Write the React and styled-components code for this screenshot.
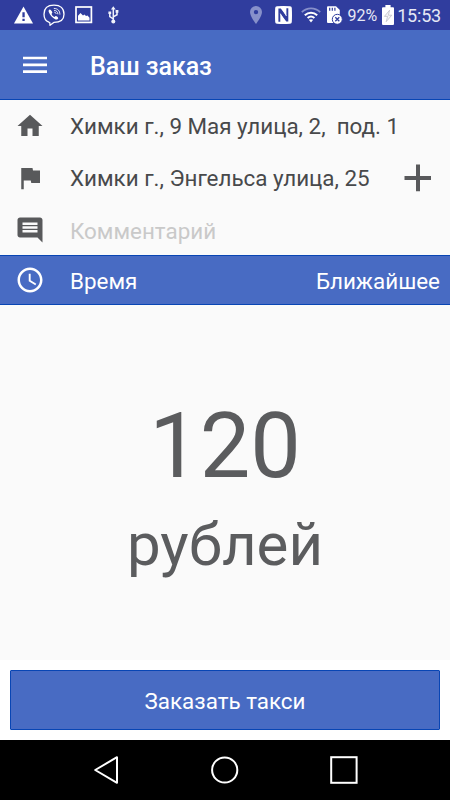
import React from "react";
import styled, { createGlobalStyle } from "styled-components";

const GlobalStyle = createGlobalStyle`
  * { box-sizing: border-box; }
  body { margin: 0; font-family: Roboto, "Noto Sans", sans-serif; }
`;

const Screen = styled.div`
  width: 450px;
  height: 800px;
  display: flex;
  flex-direction: column;
  overflow: hidden;
  background: #fafafa;
`;

const StatusBar = styled.div`
  height: 30px;
  display: flex;
  justify-content: space-between;
  padding: 0 9px 0 14px;
  background: #303d9e;
  color: #e6e8f5;
`;

const StatusGroup = styled.div`
  display: flex;
  align-items: center;
`;

const StatusText = styled.span`
  font-size: ${(p) => p.$size}px;
  line-height: 30px;
  letter-spacing: ${(p) => p.$spacing || 0}px;
  margin-left: ${(p) => p.$left || 0}px;
  padding-top: 1px;
`;

const Icon = styled.svg`
  display: block;
  flex: none;
  margin-left: ${(p) => p.$left || 0}px;
`;

const AppBar = styled.header`
  height: 70px;
  display: flex;
  align-items: center;
  gap: 43px;
  padding: 1px 23px 0 23px;
  background: #486bc3;
  border-bottom: 1px solid #0845b4;
`;

const Title = styled.h1`
  margin: 0;
  padding-top: 3px;
  font-size: 25px;
  line-height: 30px;
  font-weight: 500;
  letter-spacing: -0.05px;
  color: #fff;
`;

const Fields = styled.div`
  height: 155px;
  display: flex;
  flex-direction: column;
`;

const Row = styled.div`
  height: ${(p) => p.$height || 52}px;
  display: flex;
  align-items: center;
  padding: 0 18px 0 15px;
  color: #58595b;
`;

const TimeRow = styled(Row)`
  padding-right: 10px;
  background: #486bc3;
  border-top: 1px solid #0845b4;
  border-bottom: 1px solid #0845b4;
  color: #fff;
`;

const Label = styled.span`
  flex: 1;
  margin-left: 25px;
  padding-top: ${(p) => p.$drop || 0}px;
  font-size: 22.4px;
  line-height: 28px;
  white-space: pre;
  color: ${(p) => p.$color || "#48494b"};
`;

const Value = styled.span`
  padding-top: 2px;
  font-size: 22.4px;
  line-height: 28px;
`;

const Price = styled.main`
  flex: 1;
  display: flex;
  flex-direction: column;
  align-items: center;
  padding-top: 89px;
  color: #5b5c5e;
`;

const Amount = styled.div`
  font-size: 90px;
  line-height: 106px;
`;

const Currency = styled.div`
  font-size: 60px;
  line-height: 70px;
  margin-top: 10px;
`;

const Footer = styled.footer`
  height: 80px;
  padding: 10px;
  background: #fff;
`;

const OrderButton = styled.button`
  display: block;
  width: 430px;
  height: 60px;
  padding: 1px 0 0;
  border: 1px solid #0845b4;
  border-radius: 1px;
  background: #486bc3;
  color: #fff;
  font: 400 22.4px/28px Roboto, sans-serif;
`;

const NavBar = styled.nav`
  height: 60px;
  display: flex;
  align-items: center;
  justify-content: space-between;
  padding: 0 92px 0 93px;
  background: #000;
`;

const Material = ({ path, size = 30 }) => (
  <Icon width={size} height={size} viewBox="0 0 24 24" fill="currentColor">
    <path d={path} />
  </Icon>
);

const HOME = "M10 20v-6h4v6h5v-8h3L12 3 2 12h3v8z";
const FLAG = "M14.4 6L14 4H5v17h2v-7h5.6l.4 2h7V6z";
const COMMENT =
  "M21.99 4c0-1.1-.89-2-1.99-2H4c-1.1 0-2 .9-2 2v12c0 1.1.9 2 2 2h14l4 4-.01-18zM18 14H6v-2h12v2zm0-3H6V9h12v2zm0-3H6V6h12v2z";
const CLOCK =
  "M11.99 2C6.47 2 2 6.48 2 12s4.47 10 9.99 10C17.52 22 22 17.52 22 12S17.52 2 11.99 2zM12 20c-4.42 0-8-3.58-8-8s3.58-8 8-8 8 3.58 8 8-3.58 8-8 8zm.5-13H11v6l5.25 3.15.75-1.23-4.5-2.67z";

export default function App() {
  return (
    <>
      <GlobalStyle />
      <Screen>
        <StatusBar>
          <StatusGroup>
            <Icon width="19" height="18" viewBox="0 0 19 18">
              <path d="M9.5 .5L19 17.5H0z" fill="#fff" />
              <path d="M8.4 6.2h2.3v5H8.4zM8.4 12.8h2.3V15H8.4z" fill="#303d9e" />
            </Icon>
            <Icon $left={10} width="22" height="22" viewBox="0 0 22 22" fill="none" stroke="#fff" strokeLinecap="round">
              <path d="M5.8 18.2C2.5 16.8 1 14 1 10.2C1 4.2 4.6 1.2 11 1.2S21 4.2 21 10.2S17.4 18.4 10.8 18.4L7 21.3L6.8 18.5Z" strokeWidth="1.3" strokeLinejoin="round" />
              <path d="M6.6 5.5C5.6 6 5.4 7 5.8 8C7 11.3 9.2 13.8 12.6 15.4C13.8 15.9 14.8 15.2 15.2 14.2C15.3 13.4 13.6 12.4 12.8 12.1C12 12.1 12 13 11.2 12.9C9.8 12.3 9 11.3 8.6 10C8.7 9.2 9.5 9.1 9.3 8.3C8.8 7.1 7.8 5.6 6.6 5.5Z" fill="#fff" stroke="none" />
              <path d="M11.2 4.4C15 4.6 16.8 6.7 16.9 10.2M11.5 6.4C13.7 6.6 14.8 7.9 14.9 9.9M11.7 8.2C12.6 8.3 13 8.8 13.1 9.6" strokeWidth="0.9" />
            </Icon>
            <Icon $left={10} width="18" height="18" viewBox="0 0 18 18">
              <rect x="1" y="1" width="15.4" height="15.4" fill="none" stroke="#fff" strokeWidth="1.7" />
              <path d="M3 14.5V9.8L5.5 7L8 9.4L9.5 8.4L11 10L12.5 9.6L14.5 11.8V14.5Z" fill="#fff" />
            </Icon>
            <Icon $left={15} width="11" height="18" viewBox="0 0 11 18" stroke="#f0f2fb" fill="none">
              <path d="M5.3 2v13M5.3 13L1.8 10.5V7M5.3 10.8L9 8.7V5.5" strokeWidth="1.5" />
              <path d="M5.3 .2L7.7 3.6H2.9ZM.4 5.5h2.8v2.6H.4ZM7.6 4.1h2.8v2.7H7.6Z" fill="#f0f2fb" stroke="none" />
              <circle cx="5.3" cy="15.6" r="2" fill="#f0f2fb" stroke="none" />
            </Icon>
          </StatusGroup>
          <StatusGroup>
            <Icon width="12" height="18" viewBox="0 0 12 18">
              <path fillRule="evenodd" d="M6 0a6 6 0 0 0-6 6c0 4.4 6 12 6 12s6-7.6 6-12a6 6 0 0 0-6-6zm0 3.9a2.2 2.2 0 1 1 0 4.4a2.2 2.2 0 0 1 0-4.4z" fill="#8790ca" />
            </Icon>
            <Icon $left={13} width="17" height="18" viewBox="0 0 17 18">
              <path d="M2 .3Q8.5-.3 15 .3Q16.8.5 16.8 2Q17.2 9 16.8 16Q16.8 17.5 15 17.7Q8.5 18.3 2 17.7Q.2 17.5.2 16Q-.2 9 .2 2Q.2.5 2 .3Z" fill="#fff" />
              <path d="M3.4 2.6H5.8L11.4 10V2.2H13.3V15.4H11.3L5.3 7.6V15.8H3.4Z" fill="#303d9e" />
              <path d="M5.8 0L11.4 10M5.3 7.6L10.8 18" stroke="#fff" strokeWidth="0.7" />
            </Icon>
            <Icon $left={9} width="20" height="16" viewBox="0 0 20 16" fill="none">
              <path d="M.8 5.2C6 .2 14 .2 19.2 5.2" stroke="#8790ca" strokeWidth="1.8" />
              <path d="M3.8 8.2C7.5 4.8 12.5 4.8 16.2 8.2M6.6 11C8.6 9.2 11.4 9.2 13.4 11" stroke="#fff" strokeWidth="2" />
              <path d="M10 15.4L7.8 12.8Q10 11.5 12.2 12.8Z" fill="#fff" />
            </Icon>
            <Icon $left={6} width="16" height="19" viewBox="0 0 16 19">
              <path d="M0 1.2Q0 .3 1 .3H9L12.8 4V17H1Q0 17 0 16Z" fill="#fff" />
              <path d="M2.7 1.8v3M5.3 1.8v3M7.9 1.8v3" stroke="#303d9e" strokeWidth="1.2" />
              <circle cx="10.3" cy="13.3" r="5" fill="#fff" stroke="#303d9e" strokeWidth="1" />
              <path d="M8.3 11.3l4 4M12.3 11.3l-4 4" stroke="#303d9e" strokeWidth="1.3" />
            </Icon>
            <StatusText $size={16} $left={4}>92%</StatusText>
            <Icon $left={5} width="12" height="20" viewBox="0 0 12 20">
              <path d="M3.4 0h5.2v2.3H11Q12 2.3 12 3.3V19q0 1-1 1H1q-1 0-1-1V3.3q0-1 1-1H3.4Z" fill="#fff" />
              <path d="M7.6 5.2L2.4 11.4H5.6L4.2 16.7L9.8 10.2H6.4Z" fill="#f4f4f6" stroke="#b9bac2" strokeWidth=".7" />
            </Icon>
            <StatusText $size={18} $left={3} $spacing={-0.2}>15:53</StatusText>
          </StatusGroup>
        </StatusBar>

        <AppBar>
          <Icon width="24" height="18" viewBox="0 0 24 18" fill="#fff">
            <path d="M0 .7h24v2.6H0zM0 7.6h24v2.6H0zM0 14.3h24v2.6H0z" />
          </Icon>
          <Title>Ваш заказ</Title>
        </AppBar>

        <Fields>
          <Row>
            <Material path={HOME} />
            <Label>{"Химки г., 9 Мая улица, 2,  под. 1"}</Label>
          </Row>
          <Row>
            <Material path={FLAG} />
            <Label>Химки г., Энгельса улица, 25</Label>
            <Icon width="28" height="28" viewBox="0 0 28 28" fill="currentColor">
              <path d="M12 .5h4v11.4h11v4H16v11.4h-4V15.9H.5v-4H12z" />
            </Icon>
          </Row>
          <Row $height={51}>
            <Material path={COMMENT} />
            <Label $color="#c9c9c9" $drop={2}>Комментарий</Label>
          </Row>
        </Fields>

        <TimeRow $height={50}>
          <Material path={CLOCK} />
          <Label $color="#fff" $drop={2}>Время</Label>
          <Value>Ближайшее</Value>
        </TimeRow>

        <Price>
          <Amount>120</Amount>
          <Currency>рублей</Currency>
        </Price>

        <Footer>
          <OrderButton>Заказать такси</OrderButton>
        </Footer>

        <NavBar>
          <Icon width="27" height="30" viewBox="0 0 27 30" fill="none" stroke="#fff" strokeWidth="2">
            <path d="M24 2.2V27.8L2.2 15Z" strokeLinejoin="round" />
          </Icon>
          <Icon width="28" height="28" viewBox="0 0 28 28" fill="none" stroke="#fff" strokeWidth="2">
            <circle cx="13.7" cy="14" r="12.6" />
          </Icon>
          <Icon width="28" height="28" viewBox="0 0 28 28" fill="none" stroke="#fff" strokeWidth="2">
            <rect x="1.2" y="1.2" width="25.4" height="25.6" />
          </Icon>
        </NavBar>
      </Screen>
    </>
  );
}
